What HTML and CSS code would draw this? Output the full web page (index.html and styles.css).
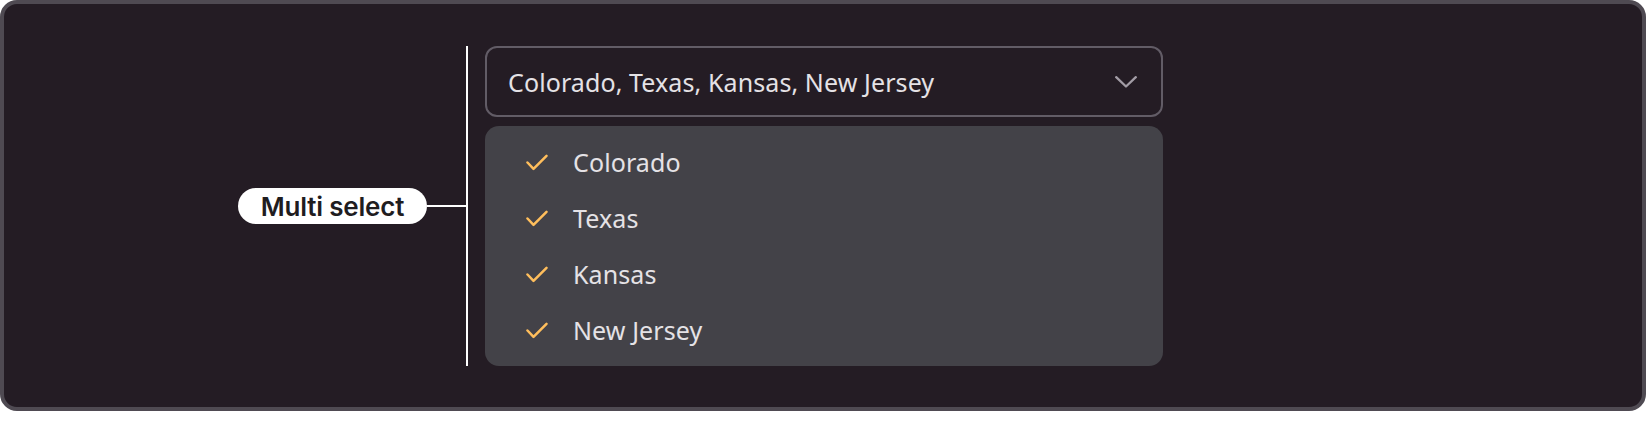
FILE: index.html
```html
<!DOCTYPE html>
<html lang="en">
<head>
<meta charset="utf-8">
<title>Multi select</title>
<link rel="stylesheet" href="styles.css">
</head>
<body>
<div class="frame">
  <div class="group">
    <div class="label-wrap">
      <span class="pill">Multi select</span>
      <span class="connector"></span>
    </div>
    <div class="bracket"></div>
    <div class="control">
      <div class="select">
        <span class="value">Colorado, Texas, Kansas, New Jersey</span>
        <svg class="chevron" viewBox="0 0 22 12" width="22" height="12"><path d="M1.2 1.2 L11 10.5 L20.8 1.2" fill="none" stroke="#a29ca5" stroke-width="2.3" stroke-linecap="round" stroke-linejoin="round"/></svg>
      </div>
      <ul class="menu">
        <li class="item"><svg class="check" viewBox="0 0 22 17" width="22" height="17"><path d="M1.5 8.5 L7.5 14.8 L20.5 1.8" fill="none" stroke="#ffbe5c" stroke-width="2.5" stroke-linecap="round" stroke-linejoin="round"/></svg><span>Colorado</span></li>
        <li class="item"><svg class="check" viewBox="0 0 22 17" width="22" height="17"><path d="M1.5 8.5 L7.5 14.8 L20.5 1.8" fill="none" stroke="#ffbe5c" stroke-width="2.5" stroke-linecap="round" stroke-linejoin="round"/></svg><span>Texas</span></li>
        <li class="item"><svg class="check" viewBox="0 0 22 17" width="22" height="17"><path d="M1.5 8.5 L7.5 14.8 L20.5 1.8" fill="none" stroke="#ffbe5c" stroke-width="2.5" stroke-linecap="round" stroke-linejoin="round"/></svg><span>Kansas</span></li>
        <li class="item"><svg class="check" viewBox="0 0 22 17" width="22" height="17"><path d="M1.5 8.5 L7.5 14.8 L20.5 1.8" fill="none" stroke="#ffbe5c" stroke-width="2.5" stroke-linecap="round" stroke-linejoin="round"/></svg><span>New Jersey</span></li>
      </ul>
    </div>
  </div>
</div>
</body>
</html>
```

FILE: styles.css
```css
* { box-sizing: border-box; }
html, body { margin: 0; padding: 0; background: #ffffff; }
body { font-family: "Noto Sans", "Open Sans", sans-serif; }

.frame {
  width: 1646px;
  height: 411px;
  background: #241c24;
  border: 4px solid #4f4a52;
  border-top-width: 4px;
  border-radius: 17px;
  padding: 42px 0 0 234px;
}

.group {
  display: flex;
  align-items: stretch;
}

.label-wrap {
  display: flex;
  align-items: center;
}

.pill {
  display: inline-flex;
  align-items: center;
  justify-content: center;
  width: 189px;
  height: 36px;
  border-radius: 18px;
  background: #ffffff;
  color: #1f1d1f;
  font-family: "Inter", "Noto Sans", sans-serif;
  font-weight: 600;
  font-size: 26px;
  letter-spacing: -0.2px;
}

.connector {
  width: 39px;
  height: 2px;
  background: #ffffff;
}

.bracket {
  width: 2px;
  background: #ffffff;
  margin-right: 17px;
}

.control {
  display: flex;
  flex-direction: column;
  gap: 9px;
  width: 678px;
}

.select {
  height: 71px;
  border: 2px solid #625c66;
  border-radius: 12px;
  display: flex;
  align-items: center;
  justify-content: space-between;
  padding: 0 24px 0 21px;
  color: #e5e2e6;
  font-size: 25px;
  letter-spacing: 0.1px;
}

.chevron { display: block; }

.menu {
  list-style: none;
  margin: 0;
  padding: 8px 0;
  background: #434248;
  border-radius: 14px;
}

.item {
  height: 56px;
  display: flex;
  align-items: center;
  padding-left: 41px;
  gap: 25px;
  color: #e5e2e6;
  font-size: 25px;
  letter-spacing: 0.1px;
}

.check { display: block; flex: none; }
```
